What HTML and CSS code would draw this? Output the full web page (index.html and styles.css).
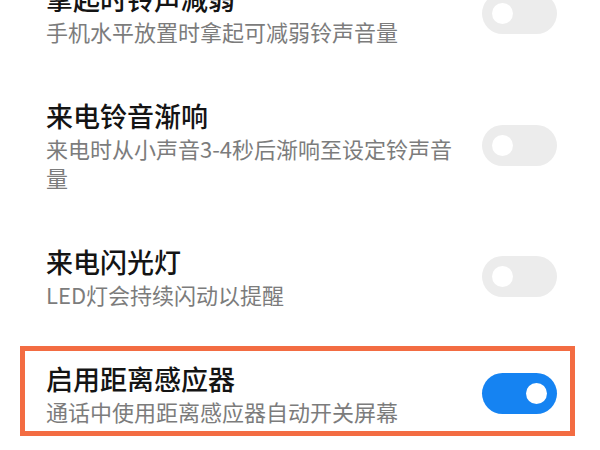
FILE: index.html
```html
<!DOCTYPE html>
<html lang="zh-CN">
<head>
<meta charset="utf-8">
<title>来电设置</title>
<link rel="stylesheet" href="styles.css">
</head>
<body>
<div class="list">
  <div class="row">
    <div class="text">
      <div class="title">拿起时铃声减弱</div>
      <div class="sub">手机水平放置时拿起可减弱铃声音量</div>
    </div>
    <div class="switch"><span class="knob"></span></div>
  </div>
  <div class="row">
    <div class="text">
      <div class="title">来电铃音渐响</div>
      <div class="sub">来电时从小声音3-4秒后渐响至设定铃声音量</div>
    </div>
    <div class="switch"><span class="knob"></span></div>
  </div>
  <div class="row">
    <div class="text">
      <div class="title">来电闪光灯</div>
      <div class="sub">LED灯会持续闪动以提醒</div>
    </div>
    <div class="switch"><span class="knob"></span></div>
  </div>
  <div class="row highlight">
    <div class="text">
      <div class="title">启用距离感应器</div>
      <div class="sub">通话中使用距离感应器自动开关屏幕</div>
    </div>
    <div class="switch on"><span class="knob"></span></div>
  </div>
</div>
</body>
</html>
```
FILE: styles.css
```css
html, body {
  margin: 0;
  padding: 0;
  background: #ffffff;
}
body {
  width: 600px;
  height: 450px;
  overflow: hidden;
  font-family: "Noto Sans CJK SC", "Noto Sans", sans-serif;
}
.list {
  display: flex;
  flex-direction: column;
  gap: 27px;
  margin-top: -34px;
}
.row {
  display: flex;
  align-items: center;
  gap: 20px;
  margin: 0 25px 0 20px;
  padding: 10px 13px 5px 21px;
  border: 5px solid transparent;
}
.row.highlight {
  border-color: #f36c42;
}
.text {
  flex: 1;
  min-width: 0;
}
.title {
  font-size: 27px;
  line-height: 36px;
  font-weight: 500;
  color: #141414;
}
.sub {
  font-size: 22px;
  line-height: 29px;
  color: #7c7c7c;
}
.switch {
  flex-shrink: 0;
  width: 75px;
  height: 41px;
  border-radius: 21px;
  background: #ececec;
  display: flex;
  align-items: center;
  padding: 0 10px;
  box-sizing: border-box;
}
.switch .knob {
  width: 21px;
  height: 21px;
  border-radius: 50%;
  background: #ffffff;
}
.switch.on {
  background: #1583f2;
  justify-content: flex-end;
}
```
